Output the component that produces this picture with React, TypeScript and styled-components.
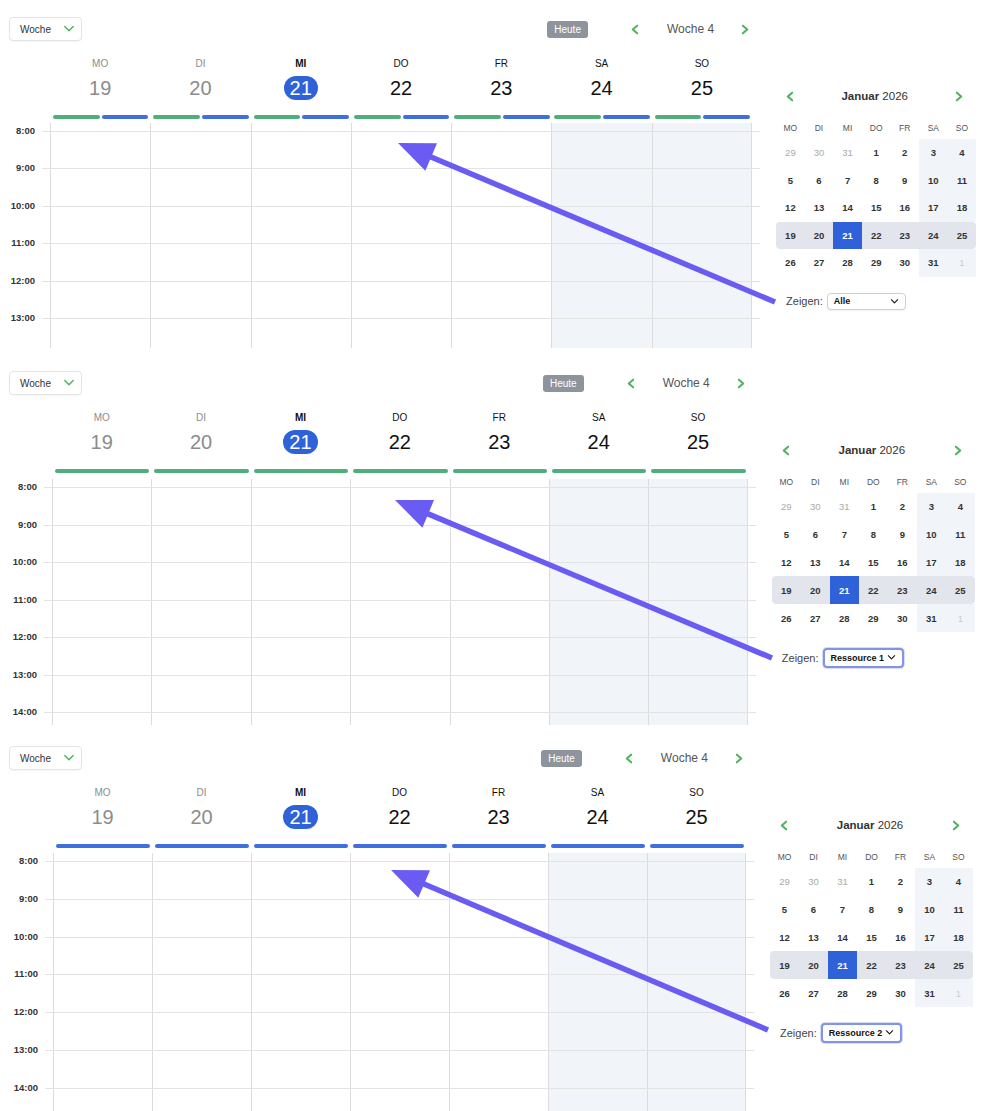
import React from "react";
import styled, { createGlobalStyle } from "styled-components";

const GlobalStyle = createGlobalStyle`
  body {
    margin: 0;
    background: #fff;
    font-family: "Liberation Sans", Arial, sans-serif;
    color: #222;
  }
`;

type BarColor = "green" | "blue";

type PanelConf = {
  height: number;
  gutter: number;
  col: number;
  rowH: number;
  firstLine: number;
  hours: number;
  gridH: number;
  cell: number;
  cellH: number;
  bars: BarColor[];
  filter: string;
  focused: boolean;
  tail: [number, number];
  tip: [number, number];
};

const panels: PanelConf[] = [
  {
    height: 354,
    gutter: 50,
    col: 100.3,
    rowH: 37.4,
    firstLine: 131,
    hours: 6,
    gridH: 225,
    cell: 28.6,
    cellH: 27.5,
    bars: ["green", "blue"],
    filter: "Alle",
    focused: false,
    tail: [775, 302],
    tip: [398, 143],
  },
  {
    height: 375,
    gutter: 52,
    col: 99.4,
    rowH: 37.5,
    firstLine: 133,
    hours: 7,
    gridH: 246,
    cell: 29,
    cellH: 27.8,
    bars: ["green"],
    filter: "Ressource 1",
    focused: true,
    tail: [772, 304],
    tip: [395, 146],
  },
  {
    height: 382,
    gutter: 53,
    col: 99,
    rowH: 37.8,
    firstLine: 132,
    hours: 7,
    gridH: 258,
    cell: 29,
    cellH: 27.8,
    bars: ["blue"],
    filter: "Ressource 2",
    focused: true,
    tail: [768, 301],
    tip: [391, 141],
  },
];

const days = [
  { label: "MO", num: 19, past: true },
  { label: "DI", num: 20, past: true },
  { label: "MI", num: 21, today: true },
  { label: "DO", num: 22 },
  { label: "FR", num: 23 },
  { label: "SA", num: 24, weekend: true },
  { label: "SO", num: 25, weekend: true },
];

const barColors: Record<BarColor, string> = {
  green: "#4fae7c",
  blue: "#3e6fdc",
};

const Panel = styled.section<{ h: number }>`
  position: relative;
  display: flex;
  height: ${({ h }) => h}px;
  overflow: hidden;
`;

const Main = styled.div<{ w: number }>`
  width: ${({ w }) => w}px;
  flex-shrink: 0;
`;

const Toolbar = styled.div`
  display: flex;
  align-items: center;
  justify-content: space-between;
  height: 24px;
  margin-top: 17px;
  padding: 0 10px 0 9px;
`;

const ViewButton = styled.div`
  display: flex;
  align-items: center;
  gap: 12px;
  height: 22px;
  width: 71px;
  box-sizing: content-box;
  border: 1px solid #e4e4e4;
  border-radius: 4px;
  box-shadow: 0 1px 1px rgba(0, 0, 0, 0.04);
  font-size: 10px;
  color: #333;
  span {
    margin-left: 10px;
  }
`;

const NavGroup = styled.div`
  display: flex;
  align-items: center;
`;

const TodayBadge = styled.div`
  height: 17px;
  line-height: 17px;
  padding: 0 7px;
  border-radius: 3px;
  background: #8e949c;
  color: #fff;
  font-size: 10px;
  margin-right: 42px;
`;

const WeekLabel = styled.div`
  font-size: 12px;
  color: #555;
  margin: 0 25px 0 26px;
`;

const DayHeader = styled.div<{ gutter: number; col: number; h: number }>`
  display: grid;
  grid-template-columns: ${({ gutter, col }) => `${gutter}px repeat(7, ${col}px)`};
  height: ${({ h }) => h}px;
`;

const DayHead = styled.div`
  display: flex;
  flex-direction: column;
  align-items: center;
  padding-top: 17px;
`;

const DayLabel = styled.div<{ tone: "past" | "today" | "normal" }>`
  font-size: 10px;
  line-height: 12px;
  color: ${({ tone }) => (tone === "past" ? "#8c8c8c" : "#111")};
  font-weight: ${({ tone }) => (tone === "today" ? 700 : 400)};
`;

const DayNum = styled.div<{ tone: "past" | "today" | "normal" }>`
  margin-top: 6px;
  height: 24px;
  line-height: 24px;
  font-size: 20px;
  padding: 0 ${({ tone }) => (tone === "today" ? "6px" : "0")};
  border-radius: 12px;
  color: ${({ tone }) =>
    tone === "past" ? "#8c8c8c" : tone === "today" ? "#fff" : "#111"};
  background: ${({ tone }) => (tone === "today" ? "#2f62d8" : "transparent")};
`;

const BarRow = styled.div`
  display: flex;
  gap: 2px;
  align-self: stretch;
  margin: 15px 2px 0 3px;
`;

const Bar = styled.div<{ color: string }>`
  flex: 1;
  height: 3.5px;
  border-radius: 2px;
  background: ${({ color }) => color};
`;

const TimeGrid = styled.div<{ gutter: number; col: number; rowH: number; hours: number; h: number }>`
  display: grid;
  grid-template-columns: ${({ gutter, col }) => `${gutter - 8}px 8px repeat(7, ${col}px) 8px`};
  grid-template-rows: ${({ rowH, hours }) => `8px repeat(${hours - 1}, ${rowH}px) 1fr`};
  height: ${({ h }) => h}px;
`;

const DayColumn = styled.div<{ index: number; weekend?: boolean; last?: boolean }>`
  grid-column: ${({ index }) => index + 3};
  grid-row: 1 / -1;
  border-left: 1px solid #dcdcdc;
  border-right: ${({ last }) => (last ? "1px solid #dcdcdc" : "none")};
  background: ${({ weekend }) => (weekend ? "#f1f4f8" : "transparent")};
`;

const HourLine = styled.div<{ row: number }>`
  grid-column: 2 / -1;
  grid-row: ${({ row }) => row};
  border-top: 1px solid #e3e3e3;
`;

const HourLabel = styled.div<{ row: number }>`
  grid-column: 1;
  grid-row: ${({ row }) => row};
  text-align: right;
  padding-right: 7px;
  font-size: 9.5px;
  font-weight: 700;
  color: #333;
  line-height: 12px;
  margin-top: -6px;
`;

const Sidebar = styled.div<{ w: number }>`
  width: ${({ w }) => w}px;
  margin-left: 16px;
  flex-shrink: 0;
  padding-top: 86px;
`;

const CalHeader = styled.div`
  display: flex;
  align-items: center;
  justify-content: space-between;
  height: 20px;
  padding: 0 12px 0 9px;
`;

const CalTitle = styled.div`
  font-size: 11.5px;
  color: #333;
  b {
    font-weight: 700;
  }
`;

const CalRow = styled.div<{ cell: number; h: number; selected?: boolean }>`
  display: grid;
  grid-template-columns: repeat(7, ${({ cell }) => cell}px);
  height: ${({ h }) => h}px;
  border-radius: ${({ selected }) => (selected ? "4px" : "0")};
  background: ${({ selected }) => (selected ? "#e2e6ec" : "transparent")};
`;

const WeekdayRow = styled(CalRow)`
  margin-top: 14px;
  height: 16px;
  margin-bottom: 3px;
`;

const Weekday = styled.div`
  display: flex;
  align-items: center;
  justify-content: center;
  font-size: 8.5px;
  color: #555;
`;

const DateCell = styled.div<{ kind: "other" | "next" | "normal" | "today"; weekend?: boolean; selected?: boolean }>`
  display: flex;
  align-items: center;
  justify-content: center;
  font-size: 9.5px;
  font-weight: ${({ kind }) => (kind === "normal" || kind === "today" ? 700 : 400)};
  color: ${({ kind }) =>
    kind === "other" ? "#aaa" : kind === "next" ? "#ccc" : kind === "today" ? "#fff" : "#333"};
  background: ${({ kind, weekend, selected }) =>
    kind === "today" ? "#2f62d8" : weekend && !selected ? "#f1f4f8" : "transparent"};
`;

const FilterRow = styled.div`
  display: flex;
  align-items: center;
  margin-top: 16px;
  padding-left: 10px;
  gap: 4px;
  font-size: 11px;
  color: #444;
`;

const FilterSelect = styled.div<{ focused: boolean }>`
  display: flex;
  align-items: center;
  justify-content: space-between;
  box-sizing: border-box;
  width: ${({ focused }) => (focused ? 81 : 79)}px;
  height: ${({ focused }) => (focused ? 20 : 17)}px;
  padding: 0 6px;
  border: ${({ focused }) => (focused ? "2px solid #8394e4" : "1px solid #d0d0d0")};
  border-radius: 4px;
  background: #fff;
  box-shadow: ${({ focused }) => (focused ? "0 0 0 1px #d6dcf6" : "0 1px 1px rgba(0,0,0,0.06)")};
  font-size: 9px;
  font-weight: 600;
  color: #111;
`;

const Overlay = styled.svg`
  position: absolute;
  inset: 0;
  width: 100%;
  height: 100%;
  pointer-events: none;
`;

const Chevron = ({ dir, color, size = 10 }: { dir: "left" | "right" | "down"; color: string; size?: number }) => {
  const d =
    dir === "left" ? "M6.5 1.5 L2.5 5 L6.5 8.5" : dir === "right" ? "M3.5 1.5 L7.5 5 L3.5 8.5" : "M1.5 3 L5 6.5 L8.5 3";
  return (
    <svg width={size} height={size} viewBox="0 0 10 10" fill="none">
      <path d={d} stroke={color} strokeWidth={dir === "down" ? 1.2 : 1.8} strokeLinecap="round" strokeLinejoin="round" />
    </svg>
  );
};

const Arrow = ({ tail, tip }: { tail: [number, number]; tip: [number, number] }) => {
  const dx = tip[0] - tail[0];
  const dy = tip[1] - tail[1];
  const len = Math.hypot(dx, dy);
  const ux = dx / len;
  const uy = dy / len;
  const bx = tip[0] - ux * 36;
  const by = tip[1] - uy * 36;
  const px = -uy * 15;
  const py = ux * 15;
  const color = "#6a5cf2";
  return (
    <Overlay>
      <line x1={tail[0]} y1={tail[1]} x2={bx + ux * 4} y2={by + uy * 4} stroke={color} strokeWidth={5.5} />
      <polygon points={`${tip[0]},${tip[1]} ${bx + px},${by + py} ${bx - px},${by - py}`} fill={color} />
    </Overlay>
  );
};

const weeks: { n: number; kind: "other" | "next" | "normal" }[][] = [
  [
    { n: 29, kind: "other" },
    { n: 30, kind: "other" },
    { n: 31, kind: "other" },
    { n: 1, kind: "normal" },
    { n: 2, kind: "normal" },
    { n: 3, kind: "normal" },
    { n: 4, kind: "normal" },
  ],
  [5, 6, 7, 8, 9, 10, 11].map((n) => ({ n, kind: "normal" as const })),
  [12, 13, 14, 15, 16, 17, 18].map((n) => ({ n, kind: "normal" as const })),
  [19, 20, 21, 22, 23, 24, 25].map((n) => ({ n, kind: "normal" as const })),
  [
    ...[26, 27, 28, 29, 30, 31].map((n) => ({ n, kind: "normal" as const })),
    { n: 1, kind: "next" as const },
  ],
];

const hourLabels = ["8:00", "9:00", "10:00", "11:00", "12:00", "13:00", "14:00"];

const MiniCalendar = ({ conf }: { conf: PanelConf }) => (
  <Sidebar w={conf.cell * 7}>
    <CalHeader>
      <Chevron dir="left" color="#4cb35c" size={11} />
      <CalTitle>
        <b>Januar</b> 2026
      </CalTitle>
      <Chevron dir="right" color="#4cb35c" size={11} />
    </CalHeader>
    <WeekdayRow cell={conf.cell} h={16}>
      {days.map((d) => (
        <Weekday key={d.label}>{d.label}</Weekday>
      ))}
    </WeekdayRow>
    {weeks.map((week, wi) => {
      const selected = wi === 3;
      return (
        <CalRow key={wi} cell={conf.cell} h={conf.cellH} selected={selected}>
          {week.map((d, di) => (
            <DateCell
              key={di}
              kind={selected && d.n === 21 ? "today" : d.kind}
              weekend={di >= 5}
              selected={selected}
            >
              {d.n}
            </DateCell>
          ))}
        </CalRow>
      );
    })}
    <FilterRow>
      Zeigen:
      <FilterSelect focused={conf.focused}>
        <span>{conf.filter}</span>
        <Chevron dir="down" color="#111" size={9} />
      </FilterSelect>
    </FilterRow>
  </Sidebar>
);

const WeekPanel = ({ conf }: { conf: PanelConf }) => {
  const mainW = conf.gutter + conf.col * 7 + 8;
  return (
    <Panel h={conf.height}>
      <Main w={mainW}>
        <Toolbar>
          <ViewButton>
            <span>Woche</span>
            <Chevron dir="down" color="#4cb35c" size={12} />
          </ViewButton>
          <NavGroup>
            <TodayBadge>Heute</TodayBadge>
            <Chevron dir="left" color="#4cb35c" size={11} />
            <WeekLabel>Woche 4</WeekLabel>
            <Chevron dir="right" color="#4cb35c" size={11} />
          </NavGroup>
        </Toolbar>
        <DayHeader gutter={conf.gutter} col={conf.col} h={conf.firstLine - 8 - 41}>
          <div />
          {days.map((d) => {
            const tone = d.past ? "past" : d.today ? "today" : "normal";
            return (
              <DayHead key={d.label}>
                <DayLabel tone={tone}>{d.label}</DayLabel>
                <DayNum tone={tone}>{d.num}</DayNum>
                <BarRow>
                  {conf.bars.map((b) => (
                    <Bar key={b} color={barColors[b]} />
                  ))}
                </BarRow>
              </DayHead>
            );
          })}
        </DayHeader>
        <TimeGrid gutter={conf.gutter} col={conf.col} rowH={conf.rowH} hours={conf.hours} h={conf.gridH}>
          {days.map((d, i) => (
            <DayColumn key={d.label} index={i} weekend={d.weekend} last={i === 6} />
          ))}
          {hourLabels.slice(0, conf.hours).map((h, i) => (
            <React.Fragment key={h}>
              <HourLine row={i + 2} />
              <HourLabel row={i + 2}>{h}</HourLabel>
            </React.Fragment>
          ))}
        </TimeGrid>
      </Main>
      <MiniCalendar conf={conf} />
      <Arrow tail={conf.tail} tip={conf.tip} />
    </Panel>
  );
};

export default function App() {
  return (
    <>
      <GlobalStyle />
      {panels.map((p, i) => (
        <WeekPanel key={i} conf={p} />
      ))}
    </>
  );
}
